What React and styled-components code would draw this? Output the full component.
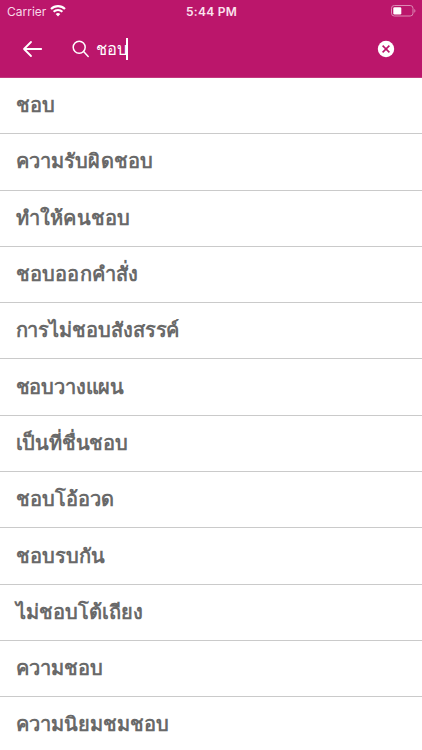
import React from "react";
import styled, { createGlobalStyle } from "styled-components";

const GlobalStyle = createGlobalStyle`
  * {
    box-sizing: border-box;
  }
  body {
    margin: 0;
    background: #fff;
    font-family: "Liberation Sans", sans-serif;
  }
`;

const Screen = styled.div`
  height: 750px;
  overflow: hidden;
  background: #fff;
`;

const Header = styled.header`
  height: 78px;
  background: #bb166b;
  border-bottom: 1px solid #c3397f;
  color: #fff;
`;

const StatusBar = styled.div`
  display: grid;
  grid-template-columns: 1fr auto 1fr;
  align-items: center;
  height: 22px;
  padding: 0 6px 0 7px;
  font-family: Inter, sans-serif;
  svg {
    display: block;
  }
`;

const Carrier = styled.div`
  display: flex;
  align-items: center;
  gap: 4px;
  font-size: 12px;
  color: #f8d9e8;
`;

const Time = styled.div`
  font-size: 12px;
  font-weight: 600;
  letter-spacing: 0.25px;
  color: #fbe3ee;
`;

const Battery = styled.div`
  justify-self: end;
`;

const SearchBar = styled.div`
  display: flex;
  align-items: center;
  height: 54px;
  padding: 0 27px 0 22px;
  svg {
    display: block;
    flex: none;
  }
`;

const Field = styled.div`
  display: flex;
  flex: 1;
  align-items: center;
  gap: 6px;
  margin-left: 29px;
`;

const Query = styled.div`
  font-size: 16.5px;
  line-height: 22px;
  white-space: nowrap;
`;

const Caret = styled.span`
  width: 2px;
  height: 22px;
  margin-left: -7px;
  background: #fff;
`;

const List = styled.ul`
  margin: 0;
  padding: 0;
  list-style: none;
`;

const Item = styled.li`
  display: flex;
  align-items: center;
  height: 56.3px;
  padding: 0 15px 1px 15.5px;
  border-bottom: 1px solid #cacaca;
  font-size: 20px;
  font-weight: bold;
  line-height: 28px;
  letter-spacing: ${props => props.$spacing || 0}px;
  white-space: nowrap;
  color: #696969;
`;

const words = [
  { text: "ชอบ" },
  { text: "ความรับผิดชอบ", spacing: 0.15 },
  { text: "ทำให้คนชอบ", spacing: 0.25 },
  { text: "ชอบออกคำสั่ง", spacing: 0.22 },
  { text: "การไม่ชอบสังสรรค์", spacing: -0.08 },
  { text: "ชอบวางแผน", spacing: -0.15 },
  { text: "เป็นที่ชื่นชอบ", spacing: -0.2 },
  { text: "ชอบโอ้อวด" },
  { text: "ชอบรบกัน" },
  { text: "ไม่ชอบโต้เถียง", spacing: 0.05 },
  { text: "ความชอบ" },
  { text: "ความนิยมชมชอบ" }
];

const WifiIcon = () => (
  <svg width="16" height="12" viewBox="0 0 16 12" fill="none" stroke="#fff">
    <path d="M1 4a10 10 0 0 1 14 0" strokeWidth="2.1" />
    <path d="M3.6 6.7a6.3 6.3 0 0 1 8.8 0" strokeWidth="2" />
    <path d="M8 11.4L5.7 9a3.3 3.3 0 0 1 4.6 0z" fill="#fff" stroke="none" />
  </svg>
);

const BatteryIcon = () => (
  <svg width="25" height="12" viewBox="0 0 25 12">
    <rect x="0.5" y="0.5" width="21.5" height="10.5" rx="2.8" fill="none" stroke="#dc8bb5" />
    <rect x="2.3" y="2.2" width="8" height="7.2" rx="1.2" fill="#fff" />
    <path d="M23.3 4v3.8c1.5-.7 1.5-3.1 0-3.8z" fill="#dc8bb5" />
  </svg>
);

const BackIcon = () => (
  <svg width="21" height="18" viewBox="0 0 21 18" fill="none" stroke="#fff" strokeWidth="1.8" strokeLinecap="round" strokeLinejoin="round">
    <path d="M19.2 9H2M9 2L2 9l7 7" />
  </svg>
);

const SearchIcon = () => (
  <svg width="18" height="18" viewBox="0 0 18 18" fill="none" stroke="#fff" strokeWidth="1.5" strokeLinecap="round">
    <circle cx="7.2" cy="7.2" r="6" />
    <path d="M11.6 11.6l4.6 4.8" />
  </svg>
);

const ClearIcon = () => (
  <svg width="18" height="18" viewBox="0 0 18 18">
    <circle cx="9" cy="9" r="8.2" fill="#fff" />
    <path d="M5.6 5.6l6.8 6.8M12.4 5.6l-6.8 6.8" stroke="#bb166b" strokeWidth="1.6" />
  </svg>
);

const App = () => (
  <>
    <GlobalStyle />
    <Screen>
      <Header>
        <StatusBar>
          <Carrier>
            Carrier
            <WifiIcon />
          </Carrier>
          <Time>5:44 PM</Time>
          <Battery>
            <BatteryIcon />
          </Battery>
        </StatusBar>
        <SearchBar>
          <BackIcon />
          <Field>
            <SearchIcon />
            <Query>ชอบ</Query>
            <Caret />
          </Field>
          <ClearIcon />
        </SearchBar>
      </Header>
      <List>
        {words.map(({ text, spacing }) => (
          <Item key={text} $spacing={spacing}>
            {text}
          </Item>
        ))}
      </List>
    </Screen>
  </>
);

export default App;
